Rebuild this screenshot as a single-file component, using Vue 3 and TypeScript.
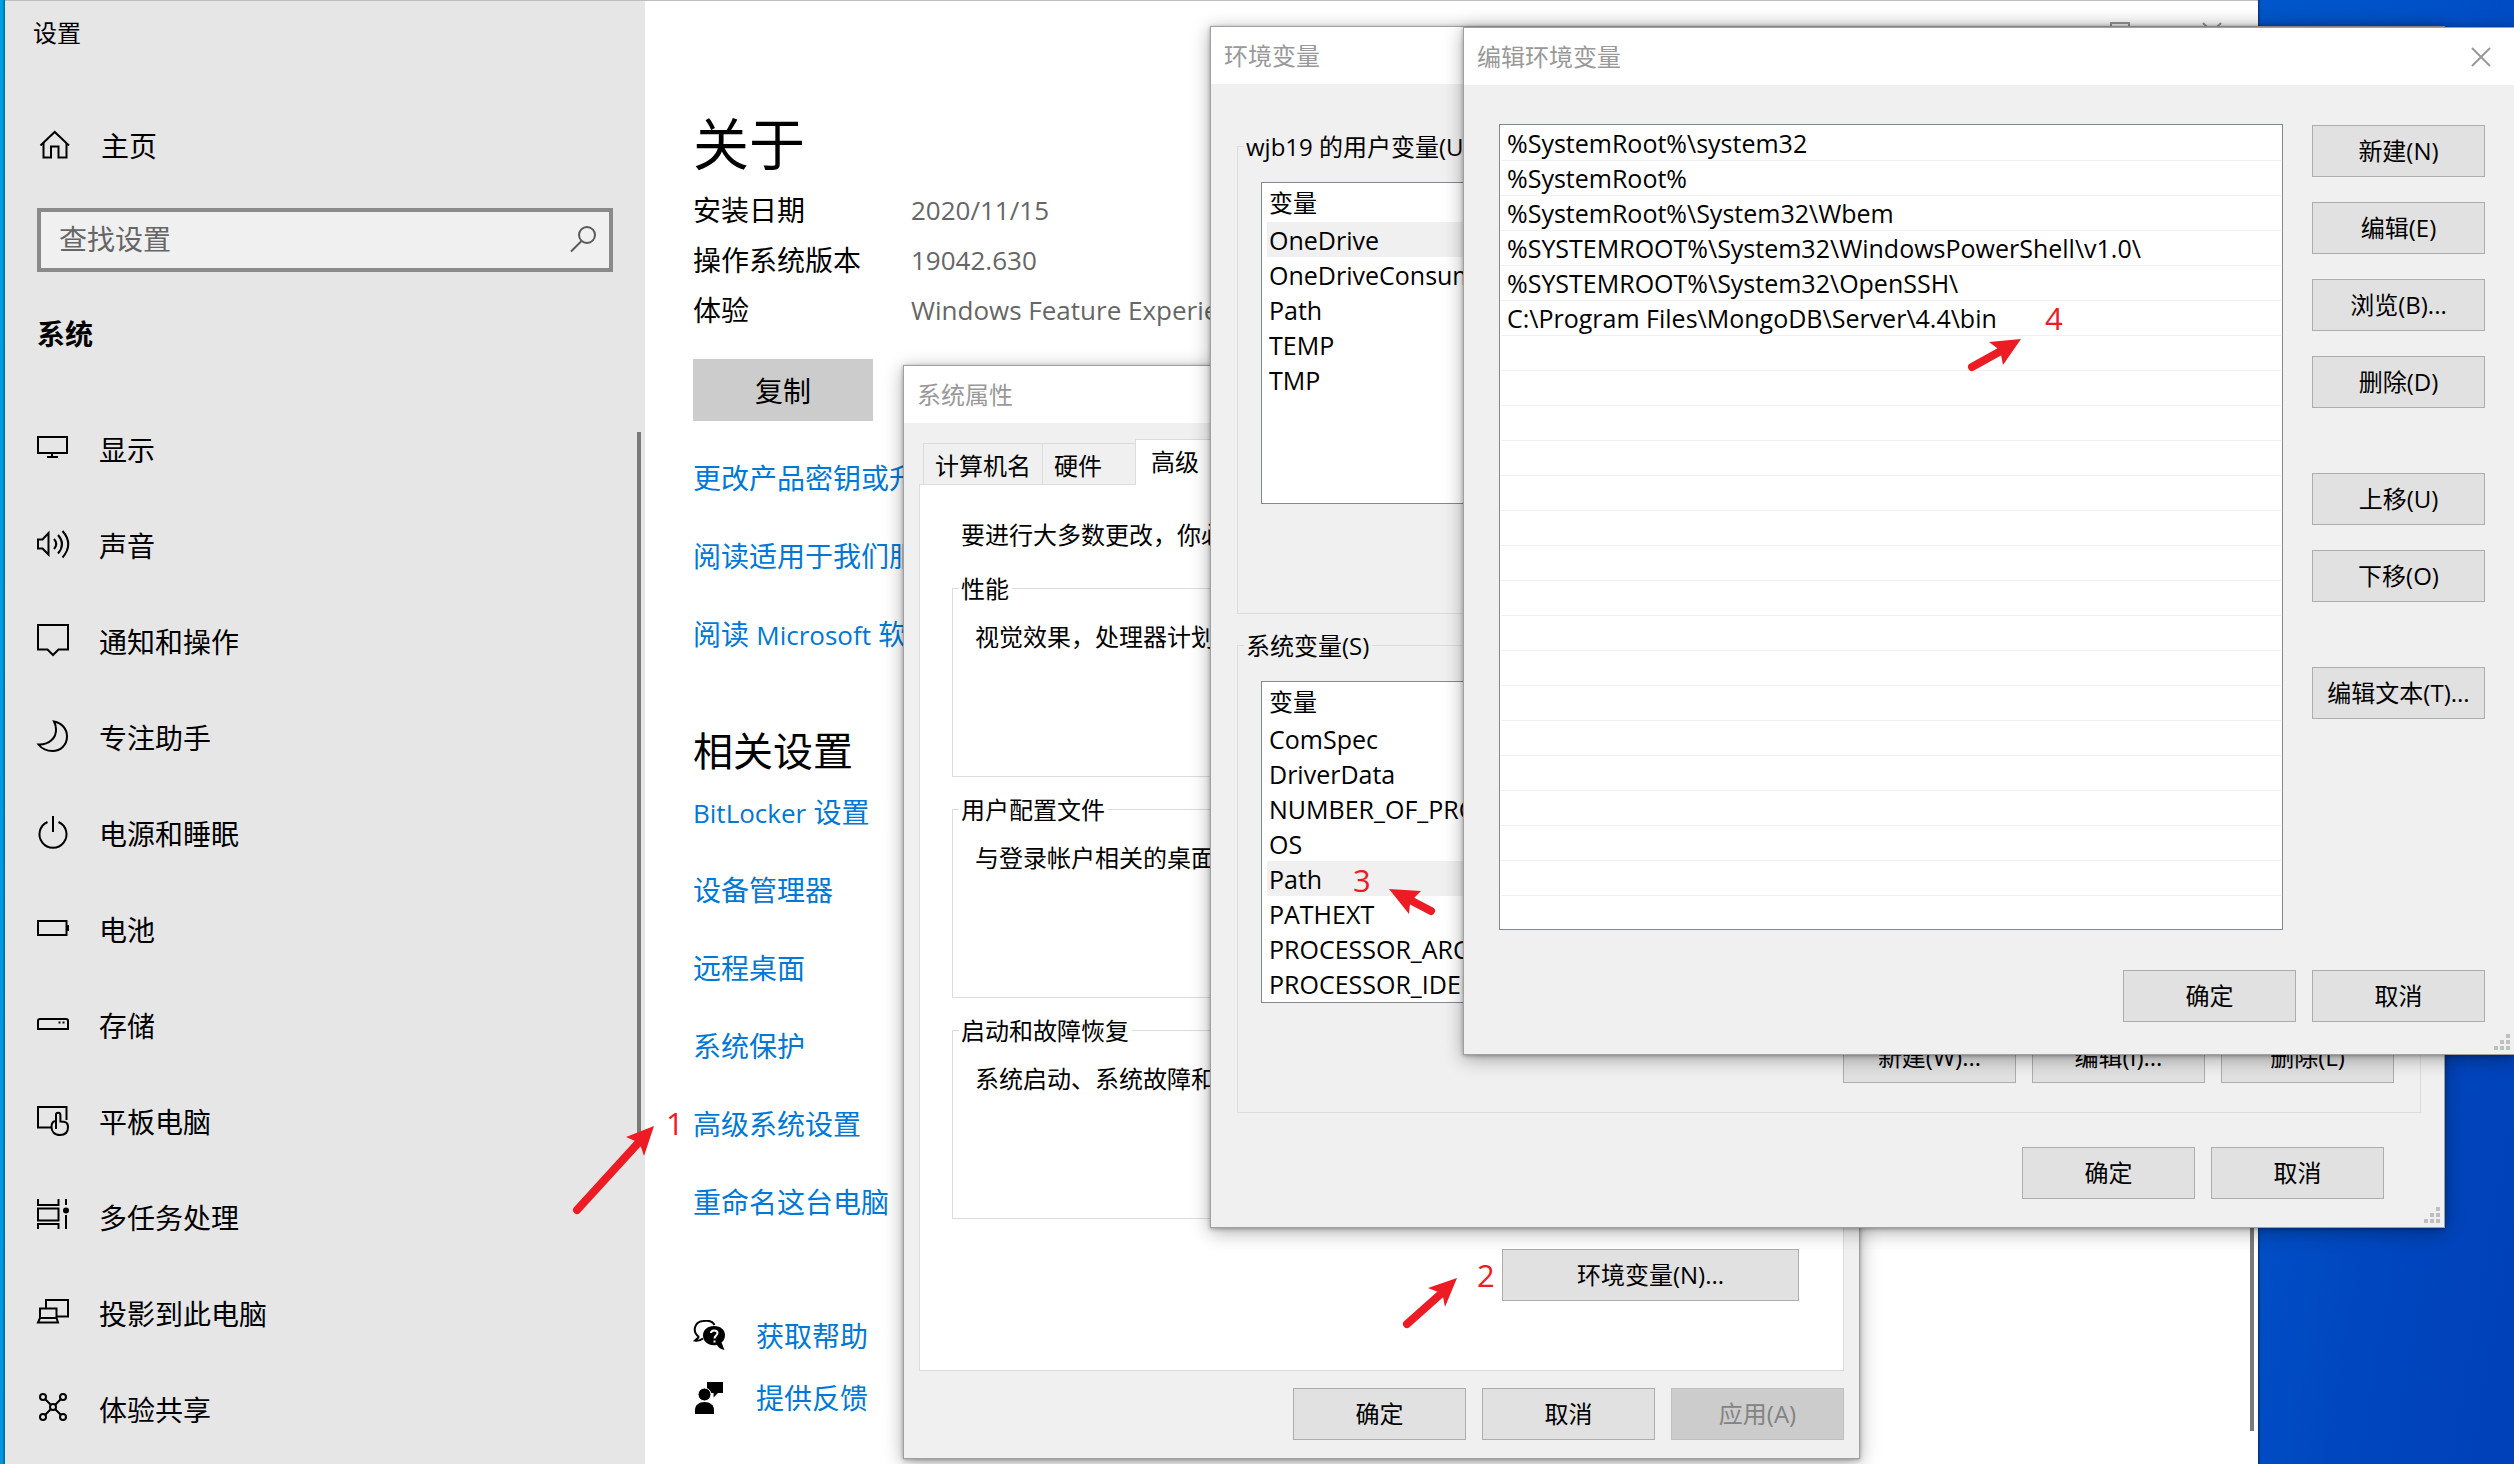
<script setup lang="ts">
import { ref } from 'vue'

interface NavItem {
  label: string
  strokes: string[]
  fills?: string[]
}

interface TextPart {
  text: string
  latin?: boolean
}

const navItems: NavItem[] = [
  { label: '显示', strokes: ['M1 7H30V23H1Z', 'M15 23V27', 'M10 27H21'] },
  {
    label: '声音',
    strokes: [
      'M1 13.5V22.5H5.5L11.5 28.5V7L5.5 13.5Z',
      'M17 13Q21.500 18 17 23',
      'M21 9Q29 18 21 27.500',
      'M25.500 5Q37 18 25.500 31.500',
    ],
  },
  { label: '通知和操作', strokes: ['M1 3H31V27.500H21.500L16 33L10.500 27.500H1Z'] },
  {
    label: '专注助手',
    strokes: ['M17 3.500C25 5 30 11 30 18.500C30 27 23.500 33 15.500 33C10 33 5 31 1.500 26.500C12 27 19.500 20 19 11C19 8 18 5.500 17 3.500Z'],
  },
  { label: '电源和睡眠', strokes: ['M16 2V18', 'M10.500 8A13.500 13.500 0 1 0 21.500 8'] },
  { label: '电池', strokes: ['M1 11H29.500V25H1Z'], fills: ['M30 15H32V21H30Z'] },
  {
    label: '存储',
    strokes: ['M3 13H29Q31 13 31 15V23H1V15Q1 13 3 13Z'],
    fills: ['M21.500 15.500H23.500V17.500H21.500Z', 'M25.500 15.500H27.500V17.500H25.500Z'],
  },
  {
    label: '平板电脑',
    strokes: [
      'M14 25.500H1V5H29.500V18',
      'M19 27V13A2.200 2.200 0 0 1 23.400 13V19.500C28 19.500 31 20 31 25C31 31 28 33 23 33C17 33 14.500 29 14.500 25C14.500 21 16 19 19 19',
    ],
  },
  {
    label: '多任务处理',
    strokes: ['M1 1V7H21.500V1', 'M1 10.500H21.500V22.500H1Z', 'M1 31V26H21.500V31', 'M29 1V7', 'M29 17V31'],
    fills: ['M26 12.500A3 3 0 1 0 32 12.500A3 3 0 1 0 26 12.500Z'],
  },
  {
    label: '投影到此电脑',
    strokes: ['M9 14V6H31V22.500H20', 'M3 14.500H19.500V24H3Z', 'M3 24L1 28.500H21L19.500 24'],
  },
  {
    label: '体验共享',
    strokes: [
      'M3 7A3 3 0 1 0 9 7A3 3 0 1 0 3 7Z',
      'M23 7A3 3 0 1 0 29 7A3 3 0 1 0 23 7Z',
      'M13 17A3 3 0 1 0 19 17A3 3 0 1 0 13 17Z',
      'M3 27A3 3 0 1 0 9 27A3 3 0 1 0 3 27Z',
      'M23 27A3 3 0 1 0 29 27A3 3 0 1 0 23 27Z',
      'M8 9L14 15M24 9L18 15M8 25L14 19M24 25L18 19',
    ],
  },
]

const specs = [
  { name: '安装日期', value: '2020/11/15' },
  { name: '操作系统版本', value: '19042.630' },
  { name: '体验', value: 'Windows Feature Experience' },
]

const aboutLinks: TextPart[][] = [
  [{ text: '更改产品密钥或升级' }],
  [{ text: '阅读适用于我们服务' }],
  [{ text: '阅读 ' }, { text: 'Microsoft', latin: true }, { text: ' 软件' }],
]
const relatedLinks: TextPart[][] = [
  [{ text: 'BitLocker', latin: true }, { text: ' 设置' }],
  [{ text: '设备管理器' }],
  [{ text: '远程桌面' }],
  [{ text: '系统保护' }],
  [{ text: '高级系统设置' }],
  [{ text: '重命名这台电脑' }],
]

const tabs = ['计算机名', '硬件', '高级']
const propertyGroups = [
  { title: '性能', text: '视觉效果，处理器计划' },
  { title: '用户配置文件', text: '与登录帐户相关的桌面' },
  { title: '启动和故障恢复', text: '系统启动、系统故障和' },
]

const variableGroups = [
  {
    title: 'wjb19 的用户变量(U)',
    selected: 'OneDrive',
    names: ['OneDrive', 'OneDriveConsumer', 'Path', 'TEMP', 'TMP'],
    actions: [] as string[],
  },
  {
    title: '系统变量(S)',
    selected: 'Path',
    names: ['ComSpec', 'DriverData', 'NUMBER_OF_PROC', 'OS', 'Path', 'PATHEXT', 'PROCESSOR_ARCH', 'PROCESSOR_IDEN'],
    actions: ['新建(W)...', '编辑(I)...', '删除(L)'],
  },
]

const paths = [
  '%SystemRoot%\\system32',
  '%SystemRoot%',
  '%SystemRoot%\\System32\\Wbem',
  '%SYSTEMROOT%\\System32\\WindowsPowerShell\\v1.0\\',
  '%SYSTEMROOT%\\System32\\OpenSSH\\',
  'C:\\Program Files\\MongoDB\\Server\\4.4\\bin',
]
const emptyRows = 16

const editActions = [
  ['新建(N)', '编辑(E)', '浏览(B)...', '删除(D)'],
  ['上移(U)', '下移(O)'],
  ['编辑文本(T)...'],
]

const query = ref('')
</script>

<template>
  <main class="desktop">
    <section class="settings" aria-label="设置">
      <aside class="sidebar">
        <p class="app-title">设置</p>
        <a class="home" href="#">
          <svg class="icon" viewBox="0 0 32 32">
            <path d="M1.500 15.500L15.700 2L30 15.500" />
            <path d="M4.500 13V27.500H12V16.500H19.500V27.500H27.500V13" />
          </svg>
          <span>主页</span>
        </a>
        <label class="search">
          <input v-model="query" type="text" placeholder="查找设置" aria-label="查找设置" />
          <svg class="icon search-icon" viewBox="0 0 28 28">
            <circle cx="18" cy="10" r="8" />
            <path d="M12.500 16L2 26.500" />
          </svg>
        </label>
        <h2 class="category">系统</h2>
        <nav class="nav">
          <a v-for="item in navItems" :key="item.label" class="nav-item" href="#">
            <svg class="icon" viewBox="0 0 32 32">
              <path v-for="d in item.strokes" :key="d" :d="d" />
              <path v-for="d in item.fills" :key="d" :d="d" class="solid" />
            </svg>
            <span>{{ item.label }}</span>
          </a>
        </nav>
        <span class="thumb"></span>
      </aside>

      <article class="about">
        <div class="caption-buttons">
          <svg viewBox="0 0 20 20"><path d="M1 1H19V19H1Z" /></svg>
          <svg viewBox="0 0 20 20"><path d="M1 1L19 19M19 1L1 19" /></svg>
        </div>
        <h1>关于</h1>
        <dl class="specs">
          <div v-for="spec in specs" :key="spec.name">
            <dt>{{ spec.name }}</dt>
            <dd>{{ spec.value }}</dd>
          </div>
        </dl>
        <button class="copy" type="button">复制</button>
        <div class="links">
          <a v-for="(link, i) in aboutLinks" :key="i" href="#"><span v-for="part in link" :key="part.text" :class="{ latin: part.latin }">{{ part.text }}</span></a>
        </div>
        <h2 class="related">相关设置</h2>
        <div class="links related-links">
          <a v-for="(link, i) in relatedLinks" :key="i" href="#"><span v-for="part in link" :key="part.text" :class="{ latin: part.latin }">{{ part.text }}</span></a>
        </div>
        <div class="support">
          <a href="#">
            <svg viewBox="0 0 32 32">
              <path class="bubble" d="M6 17C-1 12 1 2 10 1C16 0 20 2 21.500 5M6 17L2 20.500C5 21 8 20 10 18.500" />
              <path d="M21 6C28 6 32 10 32 15C32 18.500 30.500 21 28.500 22.500L31.500 30C27.500 29.500 25.500 27.500 24 25C15.500 26.500 10 21.500 10 15.500C10 10 14.500 6 21 6Z" />
              <path class="mark" d="M18 13C18 9.500 24.500 9.500 24.500 13C24.500 15.500 21.500 15.500 21.500 18.500M21.500 20.500V22.500" />
            </svg>
            <span>获取帮助</span>
          </a>
          <a href="#">
            <svg viewBox="0 0 32 32">
              <path d="M14 0H30V11H25L20.500 15.500V11H14Z" />
              <circle class="halo" cx="11.500" cy="12.500" r="6.500" />
              <path d="M2 32V28C2 23 6 20 11.500 20S21 23 21 28V32Z" />
            </svg>
            <span>提供反馈</span>
          </a>
        </div>
        <span class="thumb page-thumb"></span>
      </article>
    </section>

    <section class="dialog properties" role="dialog" aria-label="系统属性">
      <header class="titlebar">系统属性</header>
      <div class="properties-body">
        <div class="tabs" role="tablist">
          <button
            v-for="tab in tabs"
            :key="tab"
            type="button"
            role="tab"
            :class="['tab', { active: tab === '高级' }]"
          >{{ tab }}</button>
        </div>
        <div class="tab-page">
          <p class="intro">要进行大多数更改，你必</p>
          <fieldset v-for="group in propertyGroups" :key="group.title" class="group property-group">
            <legend>{{ group.title }}</legend>
            <p>{{ group.text }}</p>
          </fieldset>
          <button class="button environment-button" type="button">环境变量(N)...</button>
        </div>
        <footer class="buttons">
          <button class="button" type="button">确定</button>
          <button class="button" type="button">取消</button>
          <button class="button" type="button" disabled>应用(A)</button>
        </footer>
      </div>
    </section>

    <section class="dialog environment" role="dialog" aria-label="环境变量">
      <header class="titlebar">环境变量</header>
      <div class="environment-body">
        <fieldset v-for="group in variableGroups" :key="group.title" class="group variable-group">
          <legend>{{ group.title }}</legend>
          <div class="table-box">
            <table>
              <thead>
                <tr><th scope="col">变量</th></tr>
              </thead>
              <tbody>
                <tr v-for="name in group.names" :key="name" :class="{ selected: name === group.selected }">
                  <td>{{ name }}</td>
                </tr>
              </tbody>
            </table>
          </div>
          <div v-if="group.actions.length" class="buttons">
            <button v-for="action in group.actions" :key="action" class="button" type="button">{{ action }}</button>
          </div>
        </fieldset>
        <footer class="buttons">
          <button class="button" type="button">确定</button>
          <button class="button" type="button">取消</button>
        </footer>
      </div>
      <svg class="grip" viewBox="0 0 16 16">
        <path d="M12 0h4v4h-4zM6 6h4v4h-4zM12 6h4v4h-4zM0 12h4v4h-4zM6 12h4v4h-4zM12 12h4v4h-4z" />
      </svg>
    </section>

    <section class="dialog edit" role="dialog" aria-label="编辑环境变量">
      <header class="titlebar">
        <span>编辑环境变量</span>
        <button class="close" type="button" aria-label="关闭">
          <svg viewBox="0 0 20 20"><path d="M1 1L19 19M19 1L1 19" /></svg>
        </button>
      </header>
      <div class="edit-body">
        <div class="edit-main">
          <ul class="path-list">
            <li v-for="path in paths" :key="path">{{ path }}</li>
            <li v-for="n in emptyRows" :key="n" aria-hidden="true"></li>
          </ul>
          <div class="edit-actions">
            <div v-for="(set, index) in editActions" :key="index" class="action-set">
              <button v-for="action in set" :key="action" class="button" type="button">{{ action }}</button>
            </div>
          </div>
        </div>
        <footer class="buttons">
          <button class="button" type="button">确定</button>
          <button class="button" type="button">取消</button>
        </footer>
      </div>
      <svg class="grip" viewBox="0 0 16 16">
        <path d="M12 0h4v4h-4zM6 6h4v4h-4zM12 6h4v4h-4zM0 12h4v4h-4zM6 12h4v4h-4zM12 12h4v4h-4z" />
      </svg>
    </section>

    <svg class="annotations">
      <g>
        <path class="shaft" d="M577 1210L640 1141" />
        <path d="M654 1126L626 1137L635 1141L641 1147L644 1156Z" />
        <text x="666" y="1135">1</text>
      </g>
      <g>
        <path class="shaft" d="M1407 1324L1443 1292" />
        <path d="M1457 1278L1428 1288L1438 1292L1443 1297L1445 1307Z" />
        <text x="1477" y="1287">2</text>
      </g>
      <g>
        <path class="shaft" d="M1431 911L1410 900" />
        <path d="M1389 889L1421 891L1414 898L1410 904L1409 914Z" />
        <text x="1353" y="892">3</text>
      </g>
      <g>
        <path class="shaft" d="M1972 367L1999 352" />
        <path d="M2021 339L1989 342L1997 348L2001 355L2003 365Z" />
        <text x="2045" y="330">4</text>
      </g>
    </svg>
  </main>
</template>

<style>
html,
body {
  margin: 0;
  overflow: hidden;
}
</style>

<style scoped>
.desktop,
.desktop * {
  box-sizing: border-box;
}

.desktop {
  position: relative;
  height: 100vh;
  overflow: hidden;
  background: linear-gradient(100deg, #00a0e6 0%, #0050c8 88%, #0046be 94%, #0040b8 100%);
  color: #000;
  font-family: "Open Sans", "Noto Sans CJK SC", sans-serif;
  font-size: 24px;
  line-height: 32px;
  white-space: nowrap;
}

h1,
h2,
p,
dl,
dd,
ul {
  margin: 0;
  padding: 0;
  font-weight: 400;
}

a {
  color: inherit;
  text-decoration: none;
}

button,
input {
  font: inherit;
  color: inherit;
  margin: 0;
}

/* Settings window */
.settings {
  position: absolute;
  inset: 0 256px 0 5px;
  display: grid;
  grid-template-columns: 640px 1fr;
  border-top: 1px solid #bdbdbd;
  background: #fff;
  box-shadow: 0 0 2px 1px rgba(0, 0, 0, 0.45);
  font-size: 28px;
  overflow: hidden;
}

.sidebar {
  position: relative;
  padding: 16px 32px 0;
  background: #e6e6e6;
}

.app-title {
  margin-left: -4px;
  font-size: 24px;
}

.home {
  display: flex;
  align-items: center;
  gap: 30px;
  height: 48px;
  margin-top: 73px;
  padding-left: 2px;
}

.icon {
  width: 32px;
  height: 32px;
  overflow: visible;
  fill: none;
  stroke: #000;
  stroke-width: 2;
}

.icon .solid {
  fill: #000;
  stroke: none;
}

.search {
  display: flex;
  align-items: center;
  height: 64px;
  margin-top: 38px;
  padding: 0 12px 2px 18px;
  border: 4px solid #8a8a8a;
  background: #f0f0f0;
}

.search input {
  flex: 1;
  min-width: 0;
  padding: 0;
  border: 0;
  outline: 0;
  background: transparent;
}

.search input::placeholder {
  color: #666;
  opacity: 1;
}

.search .search-icon {
  width: 28px;
  height: 28px;
  stroke: #5a5a5a;
}

.category {
  margin-top: 42px;
  font-size: 28px;
  font-weight: 700;
  line-height: 40px;
}

.nav {
  margin-top: 48px;
}

.nav-item {
  display: flex;
  align-items: center;
  gap: 30px;
  height: 96px;
}

.nav-item .icon {
  margin-bottom: 8px;
}

.thumb {
  position: absolute;
  top: 431px;
  right: 4px;
  width: 4px;
  height: 702px;
  background: #7a7a7a;
}

.about {
  position: relative;
  padding: 106px 0 0 48px;
}

.about h1 {
  font-size: 56px;
  line-height: 72px;
}

.caption-buttons {
  position: absolute;
  top: 21px;
  right: 36px;
  display: flex;
  gap: 72px;
}

.caption-buttons svg,
.close svg {
  width: 20px;
  height: 20px;
  fill: none;
  stroke: #999;
  stroke-width: 2;
}

.specs {
  margin-top: 6px;
  line-height: 50px;
}

.specs div {
  display: flex;
}

.specs dt {
  width: 218px;
}

.specs dd {
  color: #666;
  font-size: 26px;
}

.copy {
  width: 180px;
  height: 62px;
  margin-top: 24px;
  padding: 2px 0 0;
  border: 0;
  background: #ccc;
}

.links {
  display: flex;
  flex-direction: column;
  align-items: flex-start;
  gap: 38px;
  margin-top: 37px;
  color: #0078d7;
  line-height: 40px;
}

.links a {
  height: 40px;
  white-space: pre;
}

.latin {
  font-size: 26px;
}

.about .related {
  margin-top: 69px;
  font-size: 40px;
  line-height: 56px;
}

.related-links {
  margin-top: 13px;
}

.support {
  display: grid;
  gap: 22px;
  margin-top: 94px;
  color: #0078d7;
  line-height: 40px;
}

.support a {
  display: flex;
  align-items: center;
  gap: 31px;
}

.support svg {
  width: 32px;
  height: 32px;
  fill: #000;
}

.support .bubble {
  fill: none;
  stroke: #000;
  stroke-width: 2;
}

.support .mark {
  fill: none;
  stroke: #fff;
  stroke-width: 2;
}

.support .halo {
  stroke: #fff;
  stroke-width: 1;
}

.page-thumb {
  top: auto;
  bottom: 33px;
}

/* Dialog chrome */
.dialog {
  position: absolute;
  border: 1px solid #a0a0a0;
  background: #f0f0f0;
  box-shadow: 0 4px 18px rgba(0, 0, 0, 0.32), 0 1px 4px rgba(0, 0, 0, 0.3);
}

.titlebar {
  display: flex;
  align-items: center;
  justify-content: space-between;
  height: 57px;
  padding: 0 15px 0 13px;
  background: #fff;
  color: #999;
}

.close {
  display: flex;
  padding: 8px;
  border: 0;
  background: none;
}

.button {
  width: 173px;
  height: 52px;
  padding: 0;
  border: 1px solid #adadad;
  background: #e1e1e1;
}

.button:disabled {
  border-color: #bfbfbf;
  background: #ccc;
  color: #838383;
}

.buttons {
  display: flex;
  justify-content: flex-end;
  gap: 16px;
}

.group {
  min-width: 0;
  margin: 0;
  padding: 0 0 0 6px;
  border: 1px solid #dcdcdc;
}

.group legend {
  padding: 2px 3px 0 2px;
}

.grip {
  position: absolute;
  right: 4px;
  bottom: 4px;
  width: 16px;
  height: 16px;
  fill: #bfbfbf;
}

/* System properties */
.properties {
  top: 365px;
  left: 903px;
  width: 957px;
}

.properties-body {
  padding: 16px 15px 18px;
}

.tabs {
  display: flex;
  align-items: flex-end;
  height: 45px;
  padding-left: 4px;
}

.tab {
  height: 41px;
  padding: 4px 11px 0;
  border: 1px solid #dcdcdc;
  border-width: 1px 0 0 1px;
  background: #f0f0f0;
}

.tab:nth-child(2) {
  padding-right: 33px;
}

.tab.active {
  position: relative;
  height: 46px;
  margin-bottom: -1px;
  padding: 0 15px 2px;
  border-right-width: 1px;
  background: #fff;
}

.tab-page {
  display: flex;
  flex-direction: column;
  gap: 15px;
  padding: 34px 44px 69px 32px;
  border: 1px solid #dcdcdc;
  background: #fff;
}

.intro {
  margin-bottom: 5px;
  padding-left: 9px;
}

.property-group {
  min-height: 206px;
}

.property-group p {
  margin: 16px 0 0 16px;
}

.environment-button {
  align-self: flex-end;
  width: 297px;
  margin-top: 15px;
}

.properties .buttons {
  margin-top: 17px;
}

/* Environment variables */
.environment {
  top: 26px;
  left: 1210px;
  width: 1235px;
}

.environment-body {
  padding: 45px 23px 28px 26px;
}

.variable-group {
  min-height: 485px;
  padding: 0 26px 0 23px;
}

.variable-group + .variable-group {
  margin-top: 14px;
}

.variable-group legend {
  margin-left: -17px;
}

.table-box {
  height: 322px;
  margin-top: 19px;
  padding-left: 5px;
  border: 1px solid #828790;
  background: #fff;
  overflow: hidden;
}

table {
  width: 100%;
  border-collapse: collapse;
}

th,
td {
  height: 35px;
  padding: 0 2px;
  text-align: left;
  font-weight: 400;
}

th {
  height: 39px;
}

td {
  font-size: 25px;
}

.selected {
  background: #f0f0f0;
}

.variable-group .buttons {
  margin-top: 28px;
}

.environment footer {
  margin: 34px 37px 0 0;
}

/* Edit environment variable */
.edit {
  top: 27px;
  left: 1463px;
  right: 0;
  border-right: 0;
}

.edit-body {
  padding: 39px 29px 32px 35px;
}

.edit-main {
  display: flex;
  gap: 29px;
}

.path-list {
  flex: 1;
  min-width: 0;
  padding: 1px 1px 33px;
  border: 1px solid #828790;
  background: #fff;
  list-style: none;
  font-size: 25px;
  line-height: 35px;
}

.path-list li {
  height: 35px;
  padding-left: 6px;
  border-bottom: 1px solid #f0f0f0;
}

.edit-actions {
  display: flex;
  flex-direction: column;
  gap: 65px;
  padding-top: 1px;
}

.action-set {
  display: grid;
  gap: 25px;
}

.edit footer {
  margin-top: 40px;
}

/* Step markers */
.annotations {
  position: absolute;
  inset: 0;
  width: 100%;
  height: 100%;
  fill: #ed1c24;
  pointer-events: none;
}

.annotations .shaft {
  fill: none;
  stroke: #ed1c24;
  stroke-width: 8;
  stroke-linecap: round;
}

.annotations text {
  font-size: 31px;
}
</style>
